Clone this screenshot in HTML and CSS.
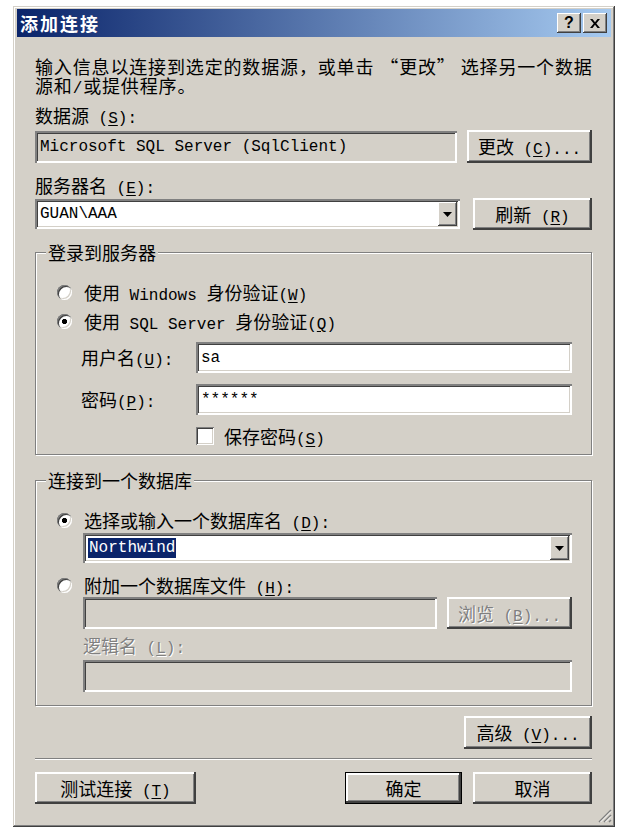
FILE: index.html
```html
<!DOCTYPE html>
<html lang="zh-CN">
<head>
<meta charset="utf-8">
<title>添加连接</title>
<link rel="stylesheet" href="styles.css">
</head>
<body>
<div class="dlg">
  <div class="titlebar">
    <span class="title">添加连接</span>
    <span class="tbtn">?</span>
    <span class="tbtn"><svg width="10" height="9" viewBox="0 0 10 9"><path d="M0 0h2.5L5 3.2 7.5 0H10L6.3 4.5 10 9H7.5L5 5.8 2.5 9H0l3.7-4.5z" fill="#000"/></svg></span>
  </div>
  <div class="content">
    <p class="desc">输入信息以连接到选定的数据源，或单击<span class="q">“更改”</span>选择另一个数据<br>源和<span class="m">/</span>或提供程序。</p>
    <div class="label">数据源<span class="m"> (<u>S</u>):</span></div>
    <div class="row src">
      <div class="field readonly"><span class="m">Microsoft SQL Server (SqlClient)</span></div>
      <div class="btn change"><span>更改<span class="m"> (<u>C</u>)...</span></span></div>
    </div>
    <div class="label server-label">服务器名<span class="m"> (<u>E</u>):</span></div>
    <div class="row server">
      <div class="combo"><span class="m val">GUAN\AAA</span><span class="drop"><svg width="9" height="5" viewBox="0 0 9 5"><path d="M0 0h9L4.5 5z" fill="#000"/></svg></span></div>
      <div class="btn refresh"><span>刷新<span class="m"> (<u>R</u>)</span></span></div>
    </div>

    <fieldset class="group login">
      <legend>登录到服务器</legend>
      <div class="gbody">
        <div class="opt"><span class="radio"></span><span>使用<span class="m"> Windows </span>身份验证<span class="m">(<u>W</u>)</span></span></div>
        <div class="opt opt-next"><span class="radio on"></span><span>使用<span class="m"> SQL Server </span>身份验证<span class="m">(<u>Q</u>)</span></span></div>
        <div class="cred cred-user"><span class="cred-label">用户名<span class="m">(<u>U</u>):</span></span><div class="field"><span class="m">sa</span></div></div>
        <div class="cred cred-pwd"><span class="cred-label">密码<span class="m">(<u>P</u>):</span></span><div class="field"><span class="m">******</span></div></div>
        <div class="save"><span class="check"></span><span>保存密码<span class="m">(<u>S</u>)</span></span></div>
      </div>
    </fieldset>

    <fieldset class="group dbgroup">
      <legend>连接到一个数据库</legend>
      <div class="gbody">
        <div class="opt"><span class="radio on"></span><span>选择或输入一个数据库名<span class="m"> (<u>D</u>):</span></span></div>
        <div class="indent">
          <div class="combo dbcombo"><span class="m val"><span class="sel">Northwind</span></span><span class="drop"><svg width="9" height="5" viewBox="0 0 9 5"><path d="M0 0h9L4.5 5z" fill="#000"/></svg></span></div>
        </div>
        <div class="opt opt-attach"><span class="radio"></span><span>附加一个数据库文件<span class="m"> (<u>H</u>):</span></span></div>
        <div class="indent">
          <div class="row attach-row">
            <div class="field readonly"></div>
            <div class="btn browse disabled"><span>浏览<span class="m"> (<u>B</u>)...</span></span></div>
          </div>
          <div class="logic-label disabled">逻辑名<span class="m"> (<u>L</u>):</span></div>
          <div class="field readonly logic-field"></div>
        </div>
      </div>
    </fieldset>

    <div class="adv-row"><div class="btn adv"><span>高级<span class="m"> (<u>V</u>)...</span></span></div></div>
    <div class="sep"></div>
    <div class="actions">
      <div class="btn test"><span>测试连接<span class="m"> (<u>T</u>)</span></span></div>
      <div class="btn ok default">确定</div>
      <div class="btn cancel">取消</div>
    </div>
  </div>
  <svg class="grip" width="16" height="16" viewBox="0 0 16 16">
    <path d="M15 3L3 15M15 8L8 15M15 13L13 15" stroke="#808080" stroke-width="1.5"/>
    <path d="M15 4.5L4.5 15M15 9.5L9.5 15" stroke="#fff" stroke-width="1"/>
  </svg>
</div>
</body>
</html>
```

FILE: styles.css
```css
* { box-sizing: border-box; }
html, body { margin: 0; background: #fff; }
body {
  font-family: "Noto Sans CJK SC", "Noto Sans CJK TC", sans-serif;
  font-size: 18px;
  line-height: 19px;
  color: #000;
}
.m {
  font-family: "Liberation Mono", "DejaVu Sans Mono", monospace;
  font-size: 16px;
  line-height: 10px;
}
u { text-decoration: underline; text-underline-offset: 2px; }

.dlg {
  position: relative;
  width: 602px;
  height: 821px;
  margin: 6px 0 0 13px;
  padding: 3px 4px;
  background: #d4d0c8;
  box-shadow: inset -1px -1px #404040, inset 1px 1px #d4d0c8, inset -2px -2px #808080, inset 2px 2px #fff;
}

.titlebar {
  display: flex;
  align-items: center;
  height: 28px;
  padding: 0 4px 0 3px;
  background: linear-gradient(90deg, #0a246a 0%, #a6caf0 100%);
}
.title { flex: 1; color: #fff; font-weight: 700; letter-spacing: 2px; }
.tbtn {
  display: flex;
  align-items: center;
  justify-content: center;
  width: 24px;
  height: 20px;
  background: #d4d0c8;
  box-shadow: inset -1px -1px #404040, inset 1px 1px #fff, inset -2px -2px #808080;
  font: 700 16px/1 "Liberation Sans", sans-serif;
}
.tbtn + .tbtn { margin-left: 2px; }

.content { padding: 0 19px 0 18px; }
.desc { margin: 20px 0 0; height: 38px; white-space: nowrap; letter-spacing: 0.85px; }
.desc .q { margin: 0 5px 0 6px; }
.label { margin-top: 11px; height: 19px; }
.server-label { margin-top: 13px; }

.row { display: flex; align-items: center; }
.src { margin-top: 5px; height: 33px; gap: 10px; }
.server { margin-top: 3px; height: 32px; gap: 13px; }

.field {
  flex: 1;
  display: flex;
  align-items: center;
  height: 32px;
  padding: 0 5px;
  background: #fff;
  box-shadow: inset 2px 2px #808080, inset -2px -2px #fff, inset 3px 3px #404040, inset -3px -3px #d4d0c8;
}
.field .m { line-height: 18px; }
.field.readonly { background: #d4d0c8; }

.combo {
  flex: 1;
  display: flex;
  align-items: center;
  height: 30px;
  padding: 3px 3px 3px 5px;
  background: #fff;
  box-shadow: inset 2px 2px #808080, inset -2px -2px #fff, inset 3px 3px #404040, inset -3px -3px #d4d0c8;
}
.combo .val { flex: 1; line-height: 18px; }
.drop {
  display: flex;
  align-items: center;
  justify-content: center;
  width: 19px;
  height: 100%;
  background: #d4d0c8;
  box-shadow: inset -1px -1px #404040, inset 1px 1px #fff, inset -2px -2px #808080;
}
.sel { background: #0a246a; color: #fff; padding: 1px 1px; }

.btn {
  flex: none;
  display: flex;
  align-items: center;
  justify-content: center;
  height: 33px;
  background: #d4d0c8;
  box-shadow: inset -2px -2px #404040, inset 2px 2px #fff, inset -3px -3px #808080;
}
.btn.default { border: 1px solid #000; }
.change { width: 125px; }
.refresh { width: 119px; height: 32px; }
.disabled { color: #808080; text-shadow: 1px 1px #fff; }

.group {
  margin: 13px 0 0;
  padding: 0;
  min-width: 0;
  border: 1px solid #808080;
  box-shadow: 1px 1px #fff, inset 1px 1px #fff;
}
.group legend {
  margin-left: 10px;
  padding: 0 2px;
  height: 19px;
  background: #d4d0c8;
}
.gbody { padding: 21px 19px 9px 21px; }
.dbgroup { margin-top: 16px; }
.dbgroup .gbody { padding-bottom: 13px; }

.opt { display: flex; align-items: center; gap: 12px; height: 19px; }
.opt-next { margin-top: 10px; }
.opt-attach { margin-top: 13px; }
.radio {
  flex: none;
  width: 15px;
  height: 15px;
  border-radius: 50%;
  background: #fff;
  box-shadow: inset 1px 1px #808080, inset 2px 2px #404040, inset -1px -1px #fff, inset -2px -2px #d4d0c8;
}
.radio.on { background: radial-gradient(circle, #000 0 2.4px, #fff 2.9px); }

.cred { display: flex; align-items: center; height: 31px; padding-left: 24px; }
.cred-user { margin-top: 11px; }
.cred-pwd { margin-top: 11px; }
.cred-label { width: 115px; flex: none; }
.cred .field { height: 31px; }

.save { display: flex; align-items: center; gap: 10px; height: 18px; margin-top: 12px; padding-left: 139px; }
.check {
  flex: none;
  width: 18px;
  height: 18px;
  background: #fff;
  box-shadow: inset 1px 1px #808080, inset -1px -1px #fff, inset 2px 2px #404040, inset -2px -2px #d4d0c8;
}

.indent { padding-left: 26px; }
.dbcombo { margin-top: 3px; }
.attach-row { margin-top: 2px; gap: 10px; }
.browse { width: 125px; height: 32px; }
.logic-label { margin-top: 7px; height: 19px; }
.logic-field { margin-top: 5px; }

.adv-row { display: flex; justify-content: flex-end; margin-top: 10px; }
.adv { width: 128px; }
.sep { margin-top: 9px; height: 2px; border-top: 1px solid #808080; border-bottom: 1px solid #fff; }
.actions { display: flex; gap: 11px; margin-top: 12px; }
.actions .btn { height: 32px; }
.test { width: 161px; margin-right: auto; }
.ok { width: 117px; }
.cancel { width: 119px; }

.grip { position: absolute; right: 3px; bottom: 4px; }
```
